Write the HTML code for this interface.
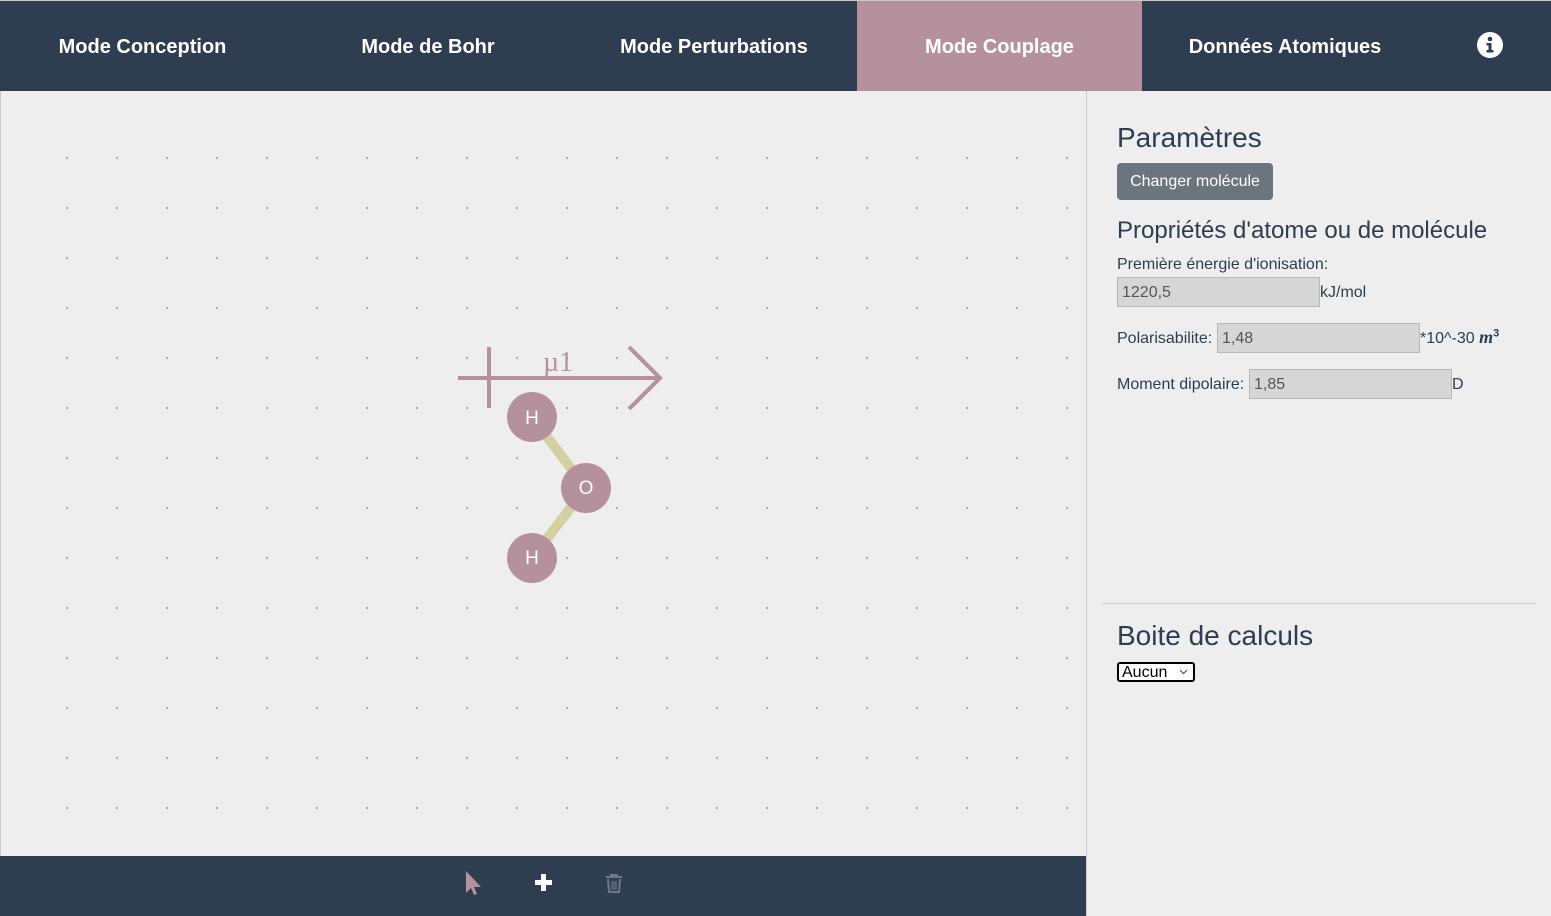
<!DOCTYPE html>
<html><head><meta charset="utf-8"><style>
*{margin:0;padding:0;box-sizing:border-box}
body{width:1551px;height:916px;overflow:hidden;background:#eee;font-family:"Liberation Sans",Arial,sans-serif;position:relative}
.nav{position:absolute;left:0;top:1px;width:1551px;height:90px;background:#2e3d4f}
.tab{position:absolute;top:1px;height:90px;line-height:90px;text-align:center;color:#fff;font-weight:bold;font-size:20px}
.abs{position:absolute}
.inp{position:absolute;height:30px;background:#d6d6d6;border:1px solid #b8b8b8;font-size:16px;color:#555;padding-left:4px;line-height:29px}
.lbl{position:absolute;font-size:16px;color:#2e3d4f}
</style></head><body>
<div class="abs" style="left:0;top:0;width:1551px;height:1px;background:#c8c8c8"></div>
<div class="nav">
<div class="abs" style="left:857px;top:0;width:285px;height:90px;background:#b5919d"></div>
<div class="tab" style="left:0;width:285px">Mode Conception</div>
<div class="tab" style="left:285px;width:286px">Mode de Bohr</div>
<div class="tab" style="left:571px;width:286px">Mode Perturbations</div>
<div class="tab" style="left:857px;width:285px">Mode Couplage</div>
<div class="tab" style="left:1142px;width:286px">Données Atomiques</div>
<svg class="abs" style="left:1477px;top:31px" width="26" height="26" viewBox="0 0 26 26"><circle cx="13" cy="13" r="13" fill="#fff"/><circle cx="13" cy="7" r="2.3" fill="#2e3d4f"/><path d="M9.5 11h5v7h2v2.5h-7V18h2v-4.5h-2z" fill="#2e3d4f"/></svg>
</div>
<div class="abs" style="left:0;top:91px;width:1px;height:825px;background:#ccc"></div>
<div class="abs" style="left:1086px;top:91px;width:1px;height:825px;background:#ccc"></div>
<svg class="abs" style="left:0;top:0" width="1086" height="916">
<defs><pattern id="d" x="66" y="157" width="50" height="50" patternUnits="userSpaceOnUse"><rect width="2" height="2" fill="#b0b0b0"/></pattern></defs>
<rect x="60" y="150" width="1015" height="665" fill="url(#d)"/>
<line x1="458" y1="378" x2="660" y2="378" stroke="#b5919d" stroke-width="4"/>
<line x1="489" y1="347" x2="489" y2="408" stroke="#b5919d" stroke-width="4"/>
<polyline points="629,347 660,378 629,409" fill="none" stroke="#b5919d" stroke-width="4"/>
<text x="543" y="371" font-family="Liberation Serif,serif" font-size="28" fill="#b5919d">µ1</text>
<line x1="532" y1="417" x2="586" y2="488" stroke="#d3d1a2" stroke-width="10"/>
<line x1="586" y1="488" x2="532" y2="558" stroke="#d3d1a2" stroke-width="10"/>
<circle cx="532" cy="417" r="25" fill="#b5919d"/>
<circle cx="586" cy="488" r="25" fill="#b5919d"/>
<circle cx="532" cy="558" r="25" fill="#b5919d"/>
<g font-family="Liberation Sans,sans-serif" font-size="19" fill="#fff" text-anchor="middle">
<text x="532" y="424">H</text><text x="586" y="494">O</text><text x="532" y="564">H</text></g>
<rect x="0" y="856" width="1086" height="60" fill="#2e3d4f"/>
<path d="M466 871 L466 893 L471 888 L474 895 L477 894 L474 887 L481 887 Z" fill="#b5919d"/>
<path d="M541 874h5v6h6v5h-6v6h-5v-6h-6v-5h6z" fill="#fff"/>
<g fill="none" stroke="#6d7883" stroke-width="2"><path d="M606 877h16M611 877v-2h6v2M608 879l1 13h10l1-13"/><path d="M612 881v9M614 881v9M616 881v9" stroke-width="1.2"/></g>
</svg>
<div class="abs" style="left:1117px;top:122px;font-size:28px;color:#2e3d4f">Paramètres</div>
<div class="abs" style="left:1117px;top:163px;width:156px;height:37px;background:#6c757d;border-radius:4px;color:#fff;font-size:16px;line-height:38px;text-align:center">Changer molécule</div>
<div class="abs" style="left:1117px;top:217px;font-size:24px;color:#2e3d4f">Propriétés d'atome ou de molécule</div>
<div class="lbl" style="left:1117px;top:256px">Première énergie d'ionisation:</div>
<div class="inp" style="left:1117px;top:277px;width:203px">1220,5</div>
<div class="lbl" style="left:1320px;top:284px">kJ/mol</div>
<div class="lbl" style="left:1117px;top:330px">Polarisabilite:</div>
<div class="inp" style="left:1217px;top:323px;width:203px">1,48</div>
<div class="lbl" style="left:1420px;top:327px">*10^-30 <i style="font-family:'Liberation Serif',serif;font-size:18px;font-weight:bold">m</i><sup style="font-size:11px;font-weight:bold">3</sup></div>
<div class="lbl" style="left:1117px;top:376px">Moment dipolaire:</div>
<div class="inp" style="left:1249px;top:369px;width:203px">1,85</div>
<div class="lbl" style="left:1452px;top:376px">D</div>
<div class="abs" style="left:1102px;top:603px;width:434px;height:1px;background:#ccc"></div>
<div class="abs" style="left:1117px;top:620px;font-size:28px;color:#2e3d4f">Boite de calculs</div>
<div class="abs" style="left:1117px;top:662px;width:78px;height:20px;border:2px solid #000;border-radius:3px;background:#fff;font-size:16px;line-height:17px;padding-left:3px">Aucun<svg style="position:absolute;right:5px;top:5px" width="9" height="6"><polyline points="1,1 4.5,4.5 8,1" fill="none" stroke="#555" stroke-width="1.2"/></svg></div>
</body></html>
